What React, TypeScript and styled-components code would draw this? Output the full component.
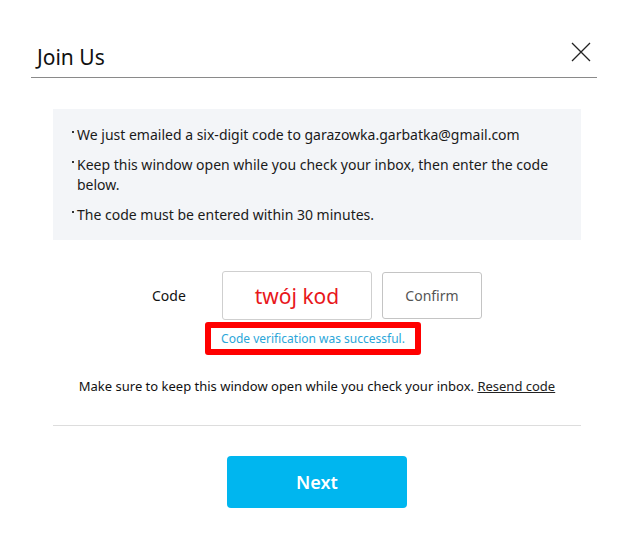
import styled, { createGlobalStyle } from 'styled-components';

const GlobalStyle = createGlobalStyle`
  html, body {
    margin: 0;
    padding: 0;
    background: #ffffff;
  }
  body {
    font-family: 'Noto Sans', 'Open Sans', sans-serif;
    color: #222222;
  }
`;

const notes = [
  'We just emailed a six-digit code to garazowka.garbatka@gmail.com',
  'Keep this window open while you check your inbox, then enter the code below.',
  'The code must be entered within 30 minutes.',
];

const App: React.FC = () => {
  return (
    <>
      <GlobalStyle />
      <Modal>
        <Header>
          <Title>Join Us</Title>
          <CloseButton aria-label="Close">
            <svg width="20" height="20" viewBox="0 0 20 20">
              <path d="M1 1 L19 19 M19 1 L1 19" stroke="#222" strokeWidth="1.3" fill="none" />
            </svg>
          </CloseButton>
        </Header>
        <Body>
          <InfoBox>
            {notes.map((note) => (
              <Note key={note}>{note}</Note>
            ))}
          </InfoBox>
          <CodeRow>
            <CodeLabel>Code</CodeLabel>
            <CodeInput defaultValue="twój kod" />
            <ConfirmButton>Confirm</ConfirmButton>
          </CodeRow>
          <StatusWrap>
            <Highlight>
              <Status>Code verification was successful.</Status>
            </Highlight>
          </StatusWrap>
          <Hint>
            Make sure to keep this window open while you check your inbox. <Resend href="#">Resend code</Resend>
          </Hint>
          <Divider />
          <Footer>
            <NextButton>Next</NextButton>
          </Footer>
        </Body>
      </Modal>
    </>
  );
};

const Modal = styled.div`
  width: 632px;
  height: 544px;
  box-sizing: border-box;
  padding: 38px 35px 0 31px;
`;

const Header = styled.div`
  display: flex;
  justify-content: space-between;
  align-items: center;
  height: 39px;
  padding-left: 6px;
  border-bottom: 1px solid #8a8a8a;
`;

const Title = styled.h1`
  margin: 0 0 2px;
  font-size: 21px;
  font-weight: 400;
  color: #111;
`;

const CloseButton = styled.button`
  display: flex;
  padding: 0;
  margin: 0 6px 12px 0;
  border: none;
  background: none;
  cursor: pointer;
`;

const Body = styled.div`
  padding: 31px 16px 0 22px;
`;

const InfoBox = styled.ul`
  margin: 0;
  padding: 16px 20px 15px 19px;
  list-style: none;
  background: #f3f5f8;
`;

const Note = styled.li`
  position: relative;
  padding-left: 5px;
  font-size: 14px;
  line-height: 20px;
  color: #1a1a1a;
  & + & {
    margin-top: 10px;
  }
  &::before {
    content: '';
    position: absolute;
    left: 0;
    top: 6px;
    width: 2px;
    height: 2px;
    background: #333;
  }
`;

const CodeRow = styled.div`
  display: flex;
  align-items: center;
  margin-top: 31px;
  padding-left: 99px;
`;

const CodeLabel = styled.span`
  width: 70px;
  font-size: 14px;
  color: #111;
`;

const CodeInput = styled.input`
  box-sizing: border-box;
  width: 150px;
  height: 49px;
  border: 1px solid #cfcfcf;
  border-radius: 3px;
  font-family: inherit;
  font-size: 21px;
  text-align: center;
  color: #e8171b;
  outline: none;
`;

const ConfirmButton = styled.button`
  box-sizing: border-box;
  width: 100px;
  height: 47px;
  margin-left: 10px;
  border: 1px solid #c4c4c4;
  border-radius: 3px;
  background: #fff;
  font-family: inherit;
  font-size: 14px;
  color: #555;
`;

const StatusWrap = styled.div`
  display: flex;
  justify-content: center;
  margin-top: 2px;
  padding-right: 8px;
`;

const Highlight = styled.div`
  box-sizing: border-box;
  width: 216px;
  height: 33px;
  border: 6px solid #ff0000;
  border-radius: 3px;
  display: flex;
  align-items: center;
  justify-content: center;
`;

const Status = styled.span`
  font-size: 12px;
  color: #2ba6d9;
`;

const Hint = styled.p`
  margin: 22px 0 0;
  text-align: center;
  font-size: 13px;
  line-height: 18px;
  color: #111;
`;

const Resend = styled.a`
  color: #222;
  text-decoration: underline;
`;

const Divider = styled.hr`
  margin: 30px 0 0;
  border: none;
  border-top: 1px solid #dddddd;
`;

const Footer = styled.div`
  display: flex;
  justify-content: center;
  padding-top: 30px;
`;

const NextButton = styled.button`
  width: 180px;
  height: 52px;
  border: none;
  border-radius: 4px;
  background: #00b6ef;
  color: #fff;
  font-family: inherit;
  font-size: 18px;
  font-weight: 600;
`;

export default App;
